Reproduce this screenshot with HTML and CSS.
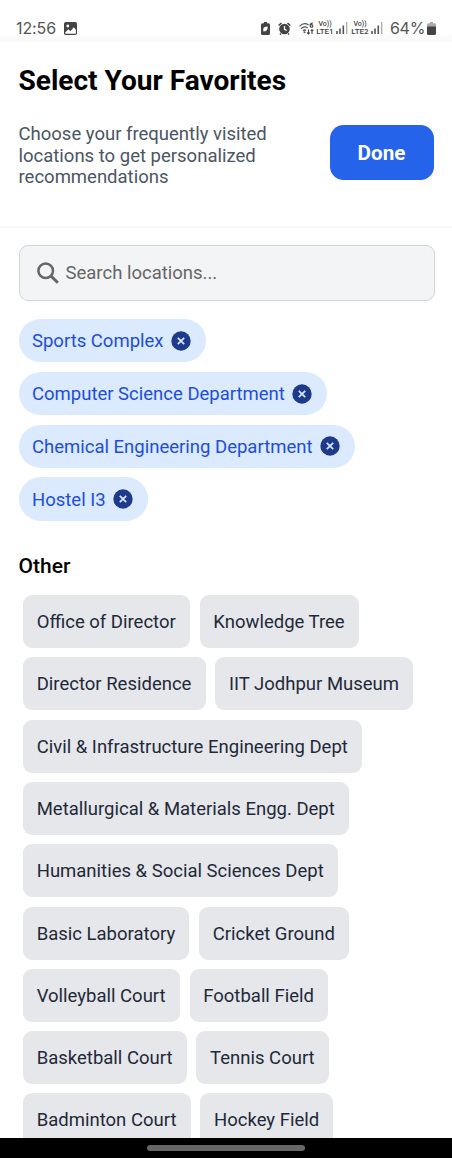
FILE: index.html
```html
<!DOCTYPE html>
<html lang="en">
<head>
<meta charset="utf-8">
<title>Select Your Favorites</title>
<link rel="stylesheet" href="styles.css">
</head>
<body>
<svg class="defs" width="0" height="0" aria-hidden="true">
  <symbol id="close" viewBox="0 0 20 20"><circle cx="10" cy="10" r="9.7" fill="#1e3a8a"/><path d="M6.800 6.800l6.400 6.400M13.200 6.800l-6.400 6.400" stroke="#dbeafe" stroke-width="1.700"/></symbol>
  <symbol id="signal" viewBox="0 0 12 12"><path d="M1 9v3M4 6.500V12M7.300 3.500V12" stroke="#555" stroke-width="1.600"/><path d="M10.700 0v12" stroke="#aaa" stroke-width="1.300"/></symbol>
</svg>
<div class="screen">
  <div class="status">
    <span class="time">12:56</span>
    <svg class="photo" viewBox="0 0 13 13"><rect width="13" height="13" rx="1.800" fill="#444"/><circle cx="3.800" cy="4" r="1.400" fill="#fff"/><path d="M1.300 10.200l3-3 2.200 2 3.200-4 2.200 2.600v3.900H1.300z" fill="#fff"/></svg>
    <div class="indicators">
      <svg class="saver" viewBox="0 0 9 13"><path d="M3 0h3v1.200h1.500Q9 1.200 9 2.700v8.800Q9 13 7.500 13h-6Q0 13 0 11.500V2.700Q0 1.200 1.500 1.200H3z" fill="#444"/><path d="M2.300 9.500V7q0-2.500 4.400-2.500Q6.700 9 4 9.200z" fill="#fff"/></svg>
      <svg class="alarm" viewBox="0 0 13 13"><circle cx="6.500" cy="7" r="5.300" fill="#444"/><path d="M.7 3.500L3.500 1M9.500 1l2.800 2.500M3 11.500l-1 1M10 11.500l1 1" stroke="#444" stroke-width="1.600"/><path d="M6.500 4v3.400l2.300 1.100" stroke="#fff" stroke-width="1.200" fill="none"/></svg>
      <svg class="wifi" viewBox="0 0 15 13"><path d="M.5 4.300Q5-.2 9.500 3M2 6.700Q5.500 3.500 8.700 6M4 8.700q1.700-1.400 3 0" stroke="#555" stroke-width="1.200" fill="none"/><circle cx="5.500" cy="10.300" r="1" fill="#555"/><path d="M13.800 1.200Q11.200.8 11 3.500M9.500 7.500V12M8 10.500L9.500 12l1.300-1.500M13 12V7.500M11.700 9L13 7.500 14.300 9" stroke="#444" stroke-width="1.100" fill="none"/><circle cx="12.500" cy="3.900" r="1.300" stroke="#444" stroke-width="1.100" fill="none"/></svg>
      <span class="lte"><span class="vo">Vo))</span><span>LTE1</span></span>
      <svg class="signal"><use href="#signal"/></svg>
      <span class="lte"><span class="vo">Vo))</span><span>LTE2</span></span>
      <svg class="signal"><use href="#signal"/></svg>
      <span class="percent">64%</span>
      <svg class="battery" viewBox="0 0 9 13"><path d="M3 0h3v1.200h1.500Q9 1.200 9 2.700V5H0V2.700q0-1.500 1.500-1.500H3z" fill="#aaa"/><path d="M0 4.600h9v6.900Q9 13 7.500 13h-6Q0 13 0 11.500z" fill="#444"/></svg>
    </div>
  </div>
  <header class="header">
    <h1>Select Your Favorites</h1>
    <div class="intro">
      <p>Choose your frequently visited locations to get personalized recommendations</p>
      <button class="done">Done</button>
    </div>
  </header>
  <main class="content">
    <div class="search">
      <svg class="magnifier" viewBox="0 0 22 22"><circle cx="8.700" cy="8.700" r="7.300" fill="none" stroke="#666" stroke-width="2.500"/><path d="M14 14l6.800 6.800" stroke="#666" stroke-width="3"/></svg>
      <span>Search locations...</span>
    </div>
    <div class="tags">
      <div class="tag"><span>Sports Complex</span><svg><use href="#close"/></svg></div>
      <div class="tag"><span>Computer Science Department</span><svg><use href="#close"/></svg></div>
      <div class="tag"><span>Chemical Engineering Department</span><svg><use href="#close"/></svg></div>
      <div class="tag"><span>Hostel I3</span><svg><use href="#close"/></svg></div>
    </div>
    <h2>Other</h2>
    <div class="chips">
      <span class="chip">Office of Director</span>
      <span class="chip">Knowledge Tree</span>
      <span class="chip">Director Residence</span>
      <span class="chip">IIT Jodhpur Museum</span>
      <span class="chip">Civil &amp; Infrastructure Engineering Dept</span>
      <span class="chip">Metallurgical &amp; Materials Engg. Dept</span>
      <span class="chip">Humanities &amp; Social Sciences Dept</span>
      <span class="chip">Basic Laboratory</span>
      <span class="chip">Cricket Ground</span>
      <span class="chip">Volleyball Court</span>
      <span class="chip">Football Field</span>
      <span class="chip">Basketball Court</span>
      <span class="chip">Tennis Court</span>
      <span class="chip">Badminton Court</span>
      <span class="chip">Hockey Field</span>
    </div>
  </main>
  <div class="navbar"><div class="handle"></div></div>
</div>
</body>
</html>
```
FILE: styles.css
```css
* { box-sizing: border-box; }
body { margin: 0; background: #fff; font-family: Roboto, sans-serif; font-size: 18.5px; }
h1, h2, p { margin: 0; }
svg { display: block; flex: none; }
.defs { position: absolute; }
.screen { height: 1158px; display: flex; flex-direction: column; overflow: hidden; }
.status { flex: none; height: 42px; padding: 14px 16px 0; display: flex; align-items: center; color: #555; background: linear-gradient(#fff 75%, #f8f8f8); }
.time { width: 48px; font-family: Inter, sans-serif; font-size: 16px; letter-spacing: -0.1px; }
.photo { width: 13px; height: 13px; }
.indicators { margin-left: auto; display: flex; align-items: center; }
.saver { width: 9px; height: 13px; margin-right: 8px; }
.alarm { width: 13px; height: 13px; margin-right: 8px; }
.wifi { width: 15px; height: 13px; margin-right: 2px; }
.lte { width: 18px; display: flex; flex-direction: column; align-items: center; font-size: 8px; line-height: 7px; font-weight: 500; color: #444; }
.vo { font-size: 7px; }
.signal { width: 12px; height: 12px; margin: 0 3px 0 2px; }
.percent { width: 37px; margin-left: 4px; font-family: Inter, sans-serif; font-size: 16px; letter-spacing: -0.3px; }
.battery { width: 9px; height: 13px; }
.header { flex: none; height: 186px; padding: 21px 18.5px 0; border-bottom: 2px solid #f9f9f9; }
h1 { font-size: 28.050px; line-height: 36px; font-weight: 700; color: #000; }
.intro { display: flex; justify-content: space-between; align-items: flex-start; margin-top: 24px; }
.intro p { width: 270px; padding-top: 1px; line-height: 21.600px; color: #4b5563; }
.done { width: 104px; height: 55px; margin-top: 2px; border: 0; border-radius: 13.500px; background: #2563eb; color: #fff; font: 700 20.700px Roboto, sans-serif; padding: 0; }
.content { flex: 1; min-height: 0; overflow: hidden; padding: 16.500px 17.500px 0 18.500px; }
.search { height: 56.500px; border: 1px solid #d1d5db; border-radius: 9px; background: #f3f4f6; display: flex; align-items: center; gap: 7px; padding-left: 17px; color: #666; }
.search span { padding-top: 1px; }
.magnifier { width: 22px; height: 22px; }
.tags { margin-top: 17.800px; display: flex; flex-direction: column; align-items: flex-start; gap: 9.200px; }
.tag { height: 43.700px; border-radius: 22px; background: #dbeafe; color: #1d4ed8; display: flex; align-items: center; gap: 7px; padding: 0 15.500px 0 13.500px; }
.tag span { padding-top: 1px; }
.tag svg { width: 20px; height: 20px; }
h2 { margin-top: 32px; font-size: 21px; line-height: 26px; font-weight: 500; color: #000; }
.chips { display: flex; flex-wrap: wrap; gap: 9.200px 9.600px; padding: 16px 0 0 4.500px; }
.chip { height: 53.100px; line-height: 54.100px; border-radius: 9px; background: #e5e7eb; color: #1f2937; padding: 0 14.300px 0 13.700px; white-space: nowrap; }
.navbar { flex: none; height: 20px; background: #000; display: flex; justify-content: center; padding-top: 7px; }
.handle { width: 158px; height: 6px; border-radius: 3px; background: #666; }
```
